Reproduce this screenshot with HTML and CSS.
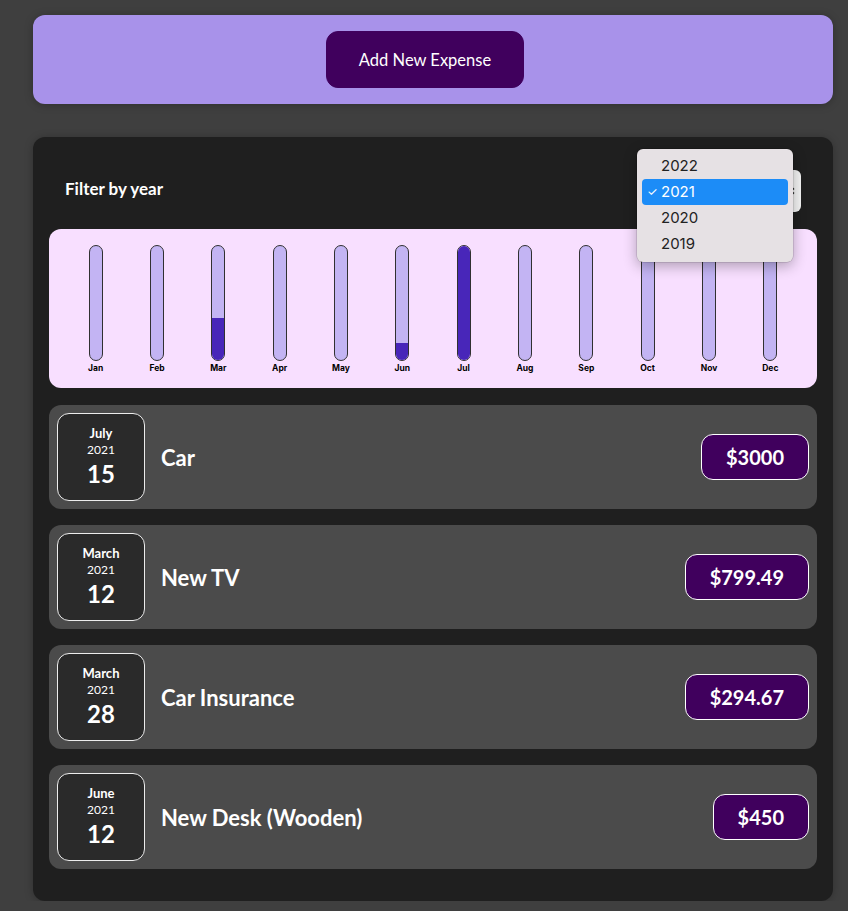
FILE: index.html
```html
<!DOCTYPE html>
<html lang="en">
<head>
<meta charset="utf-8">
<title>Expenses</title>
<link rel="stylesheet" href="styles.css">
</head>
<body>
<div class="app">
  <section class="new-expense">
    <button class="add-btn">Add New Expense</button>
  </section>

  <section class="expenses">
    <div class="filter">
      <label class="filter-label">Filter by year</label>
      <div class="select">
        <span>2021</span>
        <svg class="chev" width="8" height="12" viewBox="0 0 8 12"><path d="M1 4.5 L4 1.5 L7 4.5 M1 7.5 L4 10.5 L7 7.5" fill="none" stroke="#222" stroke-width="1.4"/></svg>
      </div>
      <div class="popup">
        <div class="opt">2022</div>
        <div class="opt sel"><span class="check">✓</span>2021</div>
        <div class="opt">2020</div>
        <div class="opt">2019</div>
      </div>
    </div>

    <div class="chart">
      <div class="col"><div class="bar"><div class="fill" style="height:0%"></div></div><div class="lbl">Jan</div></div>
      <div class="col"><div class="bar"><div class="fill" style="height:0%"></div></div><div class="lbl">Feb</div></div>
      <div class="col"><div class="bar"><div class="fill" style="height:36.5%"></div></div><div class="lbl">Mar</div></div>
      <div class="col"><div class="bar"><div class="fill" style="height:0%"></div></div><div class="lbl">Apr</div></div>
      <div class="col"><div class="bar"><div class="fill" style="height:0%"></div></div><div class="lbl">May</div></div>
      <div class="col"><div class="bar"><div class="fill" style="height:15%"></div></div><div class="lbl">Jun</div></div>
      <div class="col"><div class="bar"><div class="fill" style="height:100%"></div></div><div class="lbl">Jul</div></div>
      <div class="col"><div class="bar"><div class="fill" style="height:0%"></div></div><div class="lbl">Aug</div></div>
      <div class="col"><div class="bar"><div class="fill" style="height:0%"></div></div><div class="lbl">Sep</div></div>
      <div class="col"><div class="bar"><div class="fill" style="height:0%"></div></div><div class="lbl">Oct</div></div>
      <div class="col"><div class="bar"><div class="fill" style="height:0%"></div></div><div class="lbl">Nov</div></div>
      <div class="col"><div class="bar"><div class="fill" style="height:0%"></div></div><div class="lbl">Dec</div></div>
    </div>

    <ul class="list">
      <li class="item">
        <div class="date"><div class="month">July</div><div class="year">2021</div><div class="day">15</div></div>
        <h2 class="title">Car</h2>
        <div class="price">$3000</div>
      </li>
      <li class="item">
        <div class="date"><div class="month">March</div><div class="year">2021</div><div class="day">12</div></div>
        <h2 class="title">New TV</h2>
        <div class="price">$799.49</div>
      </li>
      <li class="item">
        <div class="date"><div class="month">March</div><div class="year">2021</div><div class="day">28</div></div>
        <h2 class="title">Car Insurance</h2>
        <div class="price">$294.67</div>
      </li>
      <li class="item">
        <div class="date"><div class="month">June</div><div class="year">2021</div><div class="day">12</div></div>
        <h2 class="title">New Desk (Wooden)</h2>
        <div class="price">$450</div>
      </li>
    </ul>
  </section>
</div>
</body>
</html>
```

FILE: styles.css
```css
* { box-sizing: border-box; }
html, body { margin: 0; padding: 0; }
body {
  background: #3f3f3f;
  font-family: "Lato", "Open Sans", sans-serif;
  color: #fff;
}
.app {
  width: 800px;
  margin: 15px 0 0 33px;
  display: flex;
  flex-direction: column;
  gap: 33px;
}
.new-expense {
  background: #a892ea;
  border-radius: 12px;
  height: 89px;
  display: flex;
  justify-content: center;
  align-items: flex-start;
  padding: 16px 16px 0 0;
  box-shadow: 0 1px 8px rgba(0,0,0,0.25);
}
.add-btn {
  font-family: inherit;
  font-size: 16.5px;
  color: #fff;
  background: #40005d;
  border: 1px solid #40005d;
  border-radius: 12px;
  width: 198px;
  height: 57px;
  padding: 0;
  cursor: pointer;
}
.expenses {
  background: #1f1f1f;
  border-radius: 12px;
  padding: 16px 16px 32px;
  box-shadow: 0 1px 8px rgba(0,0,0,0.25);
}
.filter {
  position: relative;
  display: flex;
  justify-content: space-between;
  align-items: center;
  padding: 17px 16px 17px;
}
.filter-label {
  font-weight: 700;
  font-size: 17px;
  margin-bottom: 5px;
}
.select {
  width: 100px;
  height: 42px;
  background: #f4f4f4;
  border-radius: 6px;
  color: #111;
  display: flex;
  align-items: center;
  justify-content: space-between;
  padding: 0 6px 0 12px;
  font-size: 15px;
}
.popup {
  position: absolute;
  right: 24px;
  top: -4px;
  width: 156px;
  height: 113px;
  background: #e6e1e4;
  border-radius: 6px;
  box-shadow: 0 4px 14px rgba(0,0,0,0.3), 0 0 0 0.5px rgba(0,0,0,0.2);
  padding: 4px 5px 5px;
  font-family: "Inter", "Noto Sans", sans-serif;
  font-size: 15px;
  color: #222;
  z-index: 2;
}
.opt {
  height: 26px;
  line-height: 26px;
  padding-left: 19px;
  border-radius: 4px;
  position: relative;
}
.opt.sel {
  background: #1c8cf7;
  color: #fff;
}
.check {
  position: absolute;
  left: 5px;
  font-size: 12px;
}
.chart {
  background: #f8dfff;
  border-radius: 12px;
  padding: 16px 16px 15px;
  display: grid;
  grid-template-columns: repeat(12, 1fr);
  margin-bottom: 17px;
}
.col {
  display: flex;
  flex-direction: column;
  align-items: center;
}
.bar {
  width: 14px;
  height: 116px;
  border: 1px solid #313131;
  border-radius: 12px;
  background: #c3b4f3;
  overflow: hidden;
  display: flex;
  flex-direction: column;
  justify-content: flex-end;
}
.fill {
  background: #4826b9;
  width: 100%;
}
.lbl {
  font-family: "Inter", "Roboto", sans-serif;
  font-weight: 700;
  font-size: 8.5px;
  color: #000;
  margin-top: 2px;
  line-height: 10px;
}
.list {
  list-style: none;
  margin: 0;
  padding: 0;
  display: flex;
  flex-direction: column;
  gap: 16px;
}
.item {
  background: #4b4b4b;
  border-radius: 12px;
  padding: 8px;
  display: flex;
  align-items: center;
  gap: 16px;
  height: 104px;
}
.date {
  width: 88px;
  height: 88px;
  background: #2a2a2a;
  border: 1px solid #ececec;
  border-radius: 12px;
  display: flex;
  flex-direction: column;
  align-items: center;
  justify-content: center;
}
.month { font-size: 13px; font-weight: 700; line-height: 16px; }
.year { font-size: 12px; line-height: 18px; }
.day { font-size: 24px; font-weight: 700; line-height: 30px; }
.title {
  flex: 1;
  margin: 0;
  font-size: 22px;
  font-weight: 700;
}
.price {
  background: #40005d;
  border: 1px solid #fff;
  border-radius: 12px;
  height: 46px;
  padding: 0 24px;
  display: flex;
  align-items: center;
  font-size: 20px;
  font-weight: 700;
}
```
